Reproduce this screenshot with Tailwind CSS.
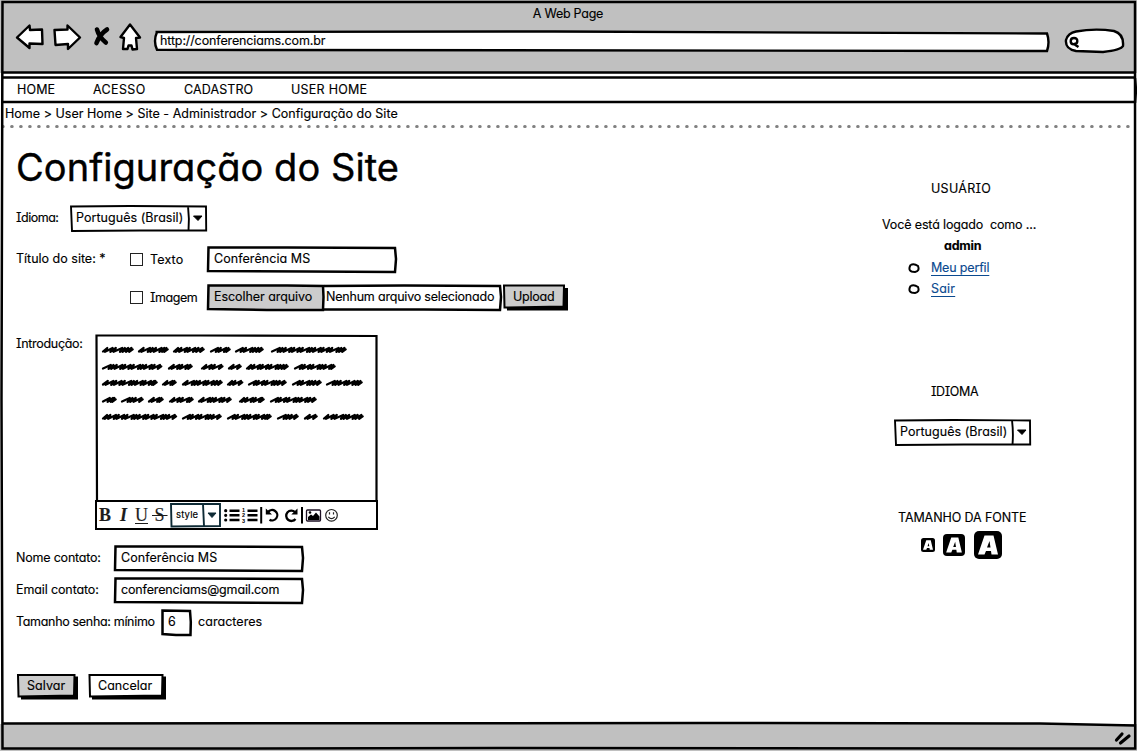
<!DOCTYPE html>
<html lang="pt-BR">
<head>
<meta charset="utf-8">
<title>Configuração do Site</title>
<script src="https://cdn.jsdelivr.net/npm/@tailwindcss/browser@4"></script>
</head>
<body class="w-[1137px] h-[751px] overflow-hidden bg-white text-black text-[12.5px] font-[Inter,'Noto_Sans',sans-serif] [font-feature-settings:'cv11','cv08'] [-webkit-text-stroke:0.15px_currentColor]">
<div class="relative flex h-[751px] w-[1137px] flex-col whitespace-nowrap">

  <header class="flex h-[73px] flex-col bg-[#c0c0c0] pl-[15px]">
    <div class="h-[22px] pr-[16px] pt-[4px] text-center leading-[20px] tracking-[-0.25px]">A Web Page</div>
    <div class="flex h-[32px]">
      <svg class="h-[32px] w-[139px]" viewBox="15 22 139 32" fill="#fff" stroke="#000" stroke-width="2.4" stroke-linejoin="round">
        <path d="M17 37.500 L29.500 25.500 L30 30 L42 29.500 L42.500 44 L29.500 43.500 V48 Z"/>
        <path d="M54.500 30 L67.500 29.500 V25.500 L80 37.500 L68 49 V44 L55.500 45 Z"/>
        <path d="M120.500 37 L130 24.500 L140 37.500 L136 38 L137 49 L132.500 49.500 L131.500 45.500 L128.500 45.500 L127.500 49 L123 49 L124 38 Z"/>
        <path fill="none" stroke-width="4.600" stroke-linecap="round" d="M97 29.500 Q99 37 105.800 42.500 M107 29.500 Q100 34 96.500 43"/>
      </svg>
      <div class="relative mt-[9px] h-[21px] w-[895px]">
        <svg class="absolute inset-0 size-full overflow-visible" viewBox="0 0 895 21" fill="#fff" stroke="#000" stroke-width="2.400"><path d="M1.500 1 L400 0.500 L893 2.500 Q896 11 893 20 L3 18.800 Q-1 10 3 1"/></svg>
        <div class="relative pl-[6px] leading-[19px] tracking-[-0.13px]">http://conferenciams.com.br</div>
      </div>
      <svg class="ml-[15px] mt-[5px] h-[27px] w-[62px]" viewBox="1064 27 62 27" fill="#fff" stroke="#000" stroke-width="2.400">
        <path d="M1076 31.500 Q1095 28 1114 31 Q1124 34 1123 46 Q1121 50 1103 52 Q1090 51.500 1076 51 Q1065 49 1066 40 Q1068 33 1076 31.500 Z"/>
        <path d="M1074 38 q3.500 0 3.300 3.200 q0 3 -3.600 3 q-3 0 -3 -3 q0 -3.200 3.300 -3.200 M1075.500 42.500 V45 L1078.500 47"/>
      </svg>
    </div>
  </header>

  <nav class="mt-[4px] flex h-[26px] leading-[25px]">
    <div class="w-[76px] pl-[17px] tracking-[0.15px]">HOME</div>
    <div class="w-[91px] pl-[17px] tracking-[0.35px]">ACESSO</div>
    <div class="w-[107px] pl-[17px] tracking-[0.1px]">CADASTRO</div>
    <div class="pl-[17px] tracking-[0.25px]">USER HOME</div>
  </nav>
  <div class="h-[22px] pl-[5px] leading-[22px] tracking-[0.02px]">Home &gt; User Home &gt; Site - Administrador &gt; Configuração do Site</div>
  <svg class="h-[3px] w-[1137px]" viewBox="0 0 1137 3"><path d="M2.600 1.500 H1130" stroke="#808080" stroke-width="3" stroke-linecap="round" stroke-dasharray="0.600 8.400"/></svg>

  <div class="flex h-[596px]">
    <main class="w-[880px] pl-[16px]">
      <h1 class="mt-[12px] h-[54px] text-[38px] leading-[54px] tracking-[0.05px] [-webkit-text-stroke:0.4px_black]">Configuração do Site</h1>

      <div class="mt-[11px] flex h-[27px] leading-[25px]">
        <div class="w-[54px] tracking-[-0.5px]">Idioma:</div>
        <div class="relative w-[137px] pl-[6px] tracking-[0.05px]">
          <svg class="absolute inset-0 size-full overflow-visible" viewBox="0 0 137 27" fill="none" stroke="#000" stroke-width="1.900"><path d="M1 1.500 L60 1 L136 1.500 L136.200 25.500 L70 25.500 L2 26 Z M118 1 Q119.500 14 118.500 25.500"/><path fill="#000" stroke-width="1" stroke-linejoin="round" d="M123.500 11 H132 L128 15.500 Z"/></svg>
          Português (Brasil)
        </div>
      </div>

      <div class="mt-[14px] flex h-[27px] leading-[25px]">
        <div class="w-[114px]">Título do site: *</div>
        <div class="mt-[7px] size-[13px] border border-[#222]"></div>
        <div class="w-[64px] pl-[7px] leading-[27px] tracking-[0.14px]">Texto</div>
        <div class="relative w-[190px] pl-[7px] tracking-[0.06px]">
          <svg class="absolute inset-0 size-full overflow-visible" viewBox="0 0 190 27" fill="none" stroke="#000" stroke-width="2.500"><path d="M1.500 1.500 L80 1.500 L188 2 L189 13 L188 26 L100 25.500 L1 25 Z"/></svg>
          Conferência MS
        </div>
      </div>

      <div class="mt-[11px] flex h-[27px] leading-[25px]">
        <div class="ml-[114px] mt-[7px] size-[13px] border border-[#222]"></div>
        <div class="w-[64px] pl-[7px] leading-[27px] tracking-[-0.45px]">Imagem</div>
        <div class="relative w-[117px] pl-[7px] tracking-[-0.06px]">
          <svg class="absolute inset-0 size-full overflow-visible" viewBox="0 0 117 27" fill="#ccc" stroke="#000" stroke-width="2.500"><path d="M1.500 1.500 L80 1.500 L116 2 L116.500 13 L116 26 L60 26 L1 25 Z"/></svg>
          <span class="relative">Escolher arquivo</span>
        </div>
        <div class="relative w-[178px] pl-[2px] tracking-[-0.2px]">
          <svg class="absolute inset-0 size-full overflow-visible" viewBox="0 0 178 27" fill="none" stroke="#000" stroke-width="2.500"><path d="M0 2 L80 1.500 L176 2 L177 13 L176 26 L100 25.500 L0 25.500"/></svg>
          Nenhum arquivo selecionado
        </div>
        <div class="relative w-[66px] pl-[11px] tracking-[-0.25px]">
          <svg class="absolute inset-0 size-full overflow-visible" viewBox="0 0 66 27" stroke="#000" stroke-width="2"><path stroke="none" d="M4 4 H66 V26.500 H5 Z"/><path fill="#ccc" d="M2 1.500 L62 1.500 L61.500 22.500 L2.500 23.500 Z"/></svg>
          <span class="relative">Upload</span>
        </div>
      </div>

      <div class="mt-[23px] flex h-[196px]">
        <div class="w-[79px] leading-[19px] tracking-[-0.3px]">Introdução:</div>
        <div class="w-[283px]">
          <svg class="h-[166px] w-[283px] overflow-visible" viewBox="95 334 283 166" fill="none" stroke="#000"><path stroke-width="2.200" d="M97 501 Q96.500 400 96.500 335.500 L200 335.500 L376.500 336 L376.500 501"/><path id="scribble" stroke-width="2.200" stroke-linejoin="round" stroke-linecap="round" d=""/></svg>
          <div class="flex h-[30px] items-center border-2 border-black text-[#1c1c1c]">
            <div class="flex font-['Liberation_Serif',serif] text-[18px] leading-[24px]">
              <b class="w-[21px] pl-[2px]">B</b><b class="w-[17px] pl-[2px] italic">I</b><span class="w-[18px] underline underline-offset-2">U</span><span class="w-[17px]"><span class="-ml-px line-through">&nbsp;</span><span class="-ml-[2px] line-through">S&#8202;&#8202;</span></span>
            </div>
            <div class="relative h-[24px] w-[51px] pl-[6px] text-[9.5px] leading-[23px] tracking-[0.15px] text-black">
              <svg class="absolute inset-0 size-full overflow-visible" viewBox="0 0 51 24" fill="none" stroke="#0d2a35" stroke-width="1.900"><path d="M1 1 L50 1 L50 23 L1.500 23.500 Z M33 1 L34 23"/><path fill="#0d2a35" stroke-width="1" d="M38 10 H46 L42 14.500 Z"/></svg>
              style
            </div>
            <svg class="ml-[2px] h-[20px] w-[120px]" viewBox="223 505.500 120 20" fill="none" stroke="#000" stroke-width="2.400">
              <path d="M229.500 511.200 H239.500 M229.500 515.800 H239.500 M229.500 520.500 H239.500 M247.500 511.200 H257.500 M247.500 515.800 H257.500 M247.500 520.500 H257.500"/>
              <path stroke-width="3.200" stroke-linecap="round" d="M225.700 511.200 h.01 M225.700 515.800 h.01 M225.700 520.500 h.01"/>
              <g fill="#000" stroke="none" font-family="Liberation Sans" font-size="5.500" font-weight="bold"><text x="242" y="512.500">1</text><text x="242" y="517.500">2</text><text x="242" y="523">3</text></g>
              <path stroke-width="2" d="M261.200 507.500 V524 M302 507.500 V524"/>
              <path stroke-width="2.300" d="M268 512.500 A5.200 5.200 0 1 1 269.500 520.200 M295 512.500 A5.200 5.200 0 1 0 295.500 519.500"/>
              <path fill="#000" stroke="none" d="M265.800 509 V515 H272 Z M297.500 509 V515 H291.300 Z"/>
              <rect x="306.500" y="510.500" width="14" height="11" rx="1" stroke="#1d1024" stroke-width="1.300"/>
              <path fill="#000" stroke="none" d="M308 520.500 V517.500 L311 515 L313 516.500 L316 513 L319.500 517 V520.500 Z"/><circle cx="310" cy="513" r="1.300" fill="#000" stroke="none"/>
              <circle cx="331.500" cy="515.800" r="5.800" stroke="#222" stroke-width="1.200"/><path stroke="#222" stroke-width="1.200" d="M328.300 517.300 Q331.500 521 334.700 517.300 M329.500 512.800 V515 M333.500 512.800 V515"/>
            </svg>
          </div>
        </div>
      </div>

      <div class="mt-[15px] flex h-[27px] leading-[25px]">
        <div class="w-[98px] tracking-[-0.2px]">Nome contato:</div>
        <div class="relative w-[190px] pl-[7px] tracking-[0.06px]">
          <svg class="absolute inset-0 size-full overflow-visible" viewBox="0 0 190 27" fill="none" stroke="#000" stroke-width="2.500"><path d="M1.500 1.500 L80 1.500 L188 2 L189 13 L188 26 L100 25.500 L1 25 Z"/></svg>
          Conferência MS
        </div>
      </div>
      <div class="mt-[5px] flex h-[27px] leading-[25px]">
        <div class="w-[98px] tracking-[-0.12px]">Email contato:</div>
        <div class="relative w-[190px] pl-[7px] tracking-[-0.15px]">
          <svg class="absolute inset-0 size-full overflow-visible" viewBox="0 0 190 27" fill="none" stroke="#000" stroke-width="2.500"><path d="M1.500 1.500 L80 1.500 L188 2 L189 13 L188 26 L100 25.500 L1 25 Z"/></svg>
          conferenciams@gmail.com
        </div>
      </div>
      <div class="mt-[5px] flex h-[27px] leading-[25px]">
        <div class="w-[145px] tracking-[-0.32px]">Tamanho senha: mínimo</div>
        <div class="relative w-[31px] pl-[7px]">
          <svg class="absolute inset-0 size-full overflow-visible" viewBox="0 0 31 27" fill="none" stroke="#000" stroke-width="2.500"><path d="M1.500 1.500 L29 2 L29.800 13 L29.500 26 L15 26 L1.500 25 Z"/></svg>
          6
        </div>
        <div class="pl-[6px] tracking-[0.05px]">caracteres</div>
      </div>

      <div class="mt-[37px] flex h-[27px] gap-[10px] leading-[25px]">
        <div class="relative w-[62px] pl-[11px] tracking-[0.06px]">
          <svg class="absolute inset-0 size-full overflow-visible" viewBox="0 0 62 27" stroke="#000" stroke-width="2"><path stroke="none" d="M5 3.500 H62 V26.500 H5 Z"/><path fill="#ccc" d="M2 2 L58.500 2 L58 22.500 L2.500 23.500 Z"/></svg>
          <span class="relative">Salvar</span>
        </div>
        <div class="relative w-[78px] pl-[10px] tracking-[0.03px]">
          <svg class="absolute inset-0 size-full overflow-visible" viewBox="0 0 78 27" stroke="#000" stroke-width="2"><path stroke="none" d="M4 3.500 H78 V26.500 H4 Z"/><path fill="#fff" d="M1.500 2 L74.500 2 L74 22.500 L2 23.500 Z"/></svg>
          <span class="relative">Cancelar</span>
        </div>
      </div>
    </main>

    <aside class="w-[200px] pt-[51px] leading-[20px]">
      <div class="pl-[51px] tracking-[0.3px]">USUÁRIO</div>
      <div class="mt-[16px] pl-[2px] tracking-[-0.14px]">Você está logado&nbsp; como ...</div>
      <div class="mt-[1px] pl-[64px] font-bold tracking-[-0.2px]">admin</div>
      <div class="mt-[2px] flex items-center pl-[28px] text-[#0b4a8f]">
        <svg class="mr-[11px] h-[10px] w-[12px]" viewBox="0 0 12 10" fill="none" stroke="#000" stroke-width="2"><path d="M2.500 2 Q6 0 10 3 Q12 8 7 9 Q-1 9 2.500 2"/></svg>
        <a class="underline underline-offset-[3px] tracking-[-0.17px]">Meu perfil</a>
      </div>
      <div class="mt-[1px] flex items-center pl-[28px] text-[#0b4a8f]">
        <svg class="mr-[11px] h-[10px] w-[12px]" viewBox="0 0 12 10" fill="none" stroke="#000" stroke-width="2"><path d="M2.500 2 Q6 0 10 3 Q12 8 7 9 Q-1 9 2.500 2"/></svg>
        <a class="underline underline-offset-[3px] tracking-[0.2px]">Sair</a>
      </div>
      <div class="mt-[83px] pl-[51px] tracking-[-0.4px]">IDIOMA</div>
      <div class="relative ml-[14px] mt-[17px] h-[27px] w-[137px] pl-[6px] leading-[25px] tracking-[0.05px]">
        <svg class="absolute inset-0 size-full overflow-visible" viewBox="0 0 137 27" fill="none" stroke="#000" stroke-width="1.900"><path d="M1 1.500 L60 1 L136 1.500 L136.200 25.500 L70 25.500 L2 26 Z M118 1 Q119.500 14 118.500 25.500"/><path fill="#000" stroke-width="1" stroke-linejoin="round" d="M123.500 11 H132 L128 15.500 Z"/></svg>
        Português (Brasil)
      </div>
      <div class="mt-[62px] pl-[18px] tracking-[-0.1px]">TAMANHO DA FONTE</div>
      <div class="mt-[3px] flex h-[28px] items-center pl-[41px]">
        <svg class="mr-[8px] size-[14px]" viewBox="0 0 28 28"><rect width="28" height="28" rx="5"/><path fill="#fff" fill-rule="evenodd" d="M10.500 4.500 H19.500 L24 23.500 H17.500 L17 20 H12 L10.500 23.500 H4 Z M15.500 10 L13 16.500 H16.500 Z"/></svg>
        <svg class="mr-[9px] size-[22px]" viewBox="0 0 28 28"><rect width="28" height="28" rx="5"/><path fill="#fff" fill-rule="evenodd" d="M10.500 4.500 H19.500 L24 23.500 H17.500 L17 20 H12 L10.500 23.500 H4 Z M15.500 10 L13 16.500 H16.500 Z"/></svg>
        <svg class="size-[28px]" viewBox="0 0 28 28"><rect width="28" height="28" rx="5"/><path fill="#fff" fill-rule="evenodd" d="M10.500 4.500 H19.500 L24 23.500 H17.500 L17 20 H12 L10.500 23.500 H4 Z M15.500 10 L13 16.500 H16.500 Z"/></svg>
      </div>
    </aside>
  </div>

  <footer class="flex h-[27px] justify-end bg-[#c0c0c0] pr-[5px]">
    <svg class="mt-[7px] h-[15px] w-[18px]" viewBox="0 0 18 15" stroke="#000" stroke-width="3.200" stroke-linecap="round"><path d="M2.500 9 L8 3 M6.500 12 L15 5"/></svg>
  </footer>

  <!-- Hand-drawn window outline and separators -->
  <svg class="pointer-events-none absolute inset-0 size-full" viewBox="0 0 1137 751" fill="none" stroke="#000" stroke-width="2.500">
    <path d="M2.500 2 L600 2 L1135 2 L1135.200 748.500 L500 748 L200 748.500 L2.500 748.500 L1.500 400 Z"/>
    <path d="M2 72.500 L1136 72.500 M2 77.500 H1135 M1 102 L1136 102 M1135 78 L1136 90 L1135 103 M3 723.500 L700 723 L1040 723.500 L1135 725.500"/>
  </svg>
</div>
<script>
  // Placeholder handwriting: each row is [baseline, start, end, start, end, ...]
  const rows = [
    [350, 102,133, 138,168, 173,204, 210,230, 235,263, 271,346],
    [367, 102,162, 168,192, 201,223, 228,241, 246,288, 294,335],
    [383, 102,157, 162,176, 182,222, 227,243, 248,286, 292,321, 326,362],
    [400, 102,116, 121,143, 148,163, 169,193, 198,231, 239,264, 270,316],
    [417, 102,177, 182,222, 227,271, 277,298, 304,318, 323,363]
  ];
  let d = '';
  for (const [y, ...xs] of rows)
    for (let i = 0; i < xs.length; i += 2) {
      let x = xs[i] + 1, end = xs[i + 1] - 3, k = i + y;
      d += `M${x} ${y + 1.5}`;
      while (x < end - 1) {
        const step = [2.8, 5.4, 3.2, 6.4, 2.6, 3.4, 5.6][k++ % 7];
        const nx = Math.min(x + step, end);
        d += `L${nx + 1.4} ${y - 2}L${nx - 0.8} ${y + 1.8}`;
        x = nx;
      }
      d += `l3.500 -2.500`;
    }
  document.getElementById('scribble').setAttribute('d', d);
</script>
</body>
</html>
